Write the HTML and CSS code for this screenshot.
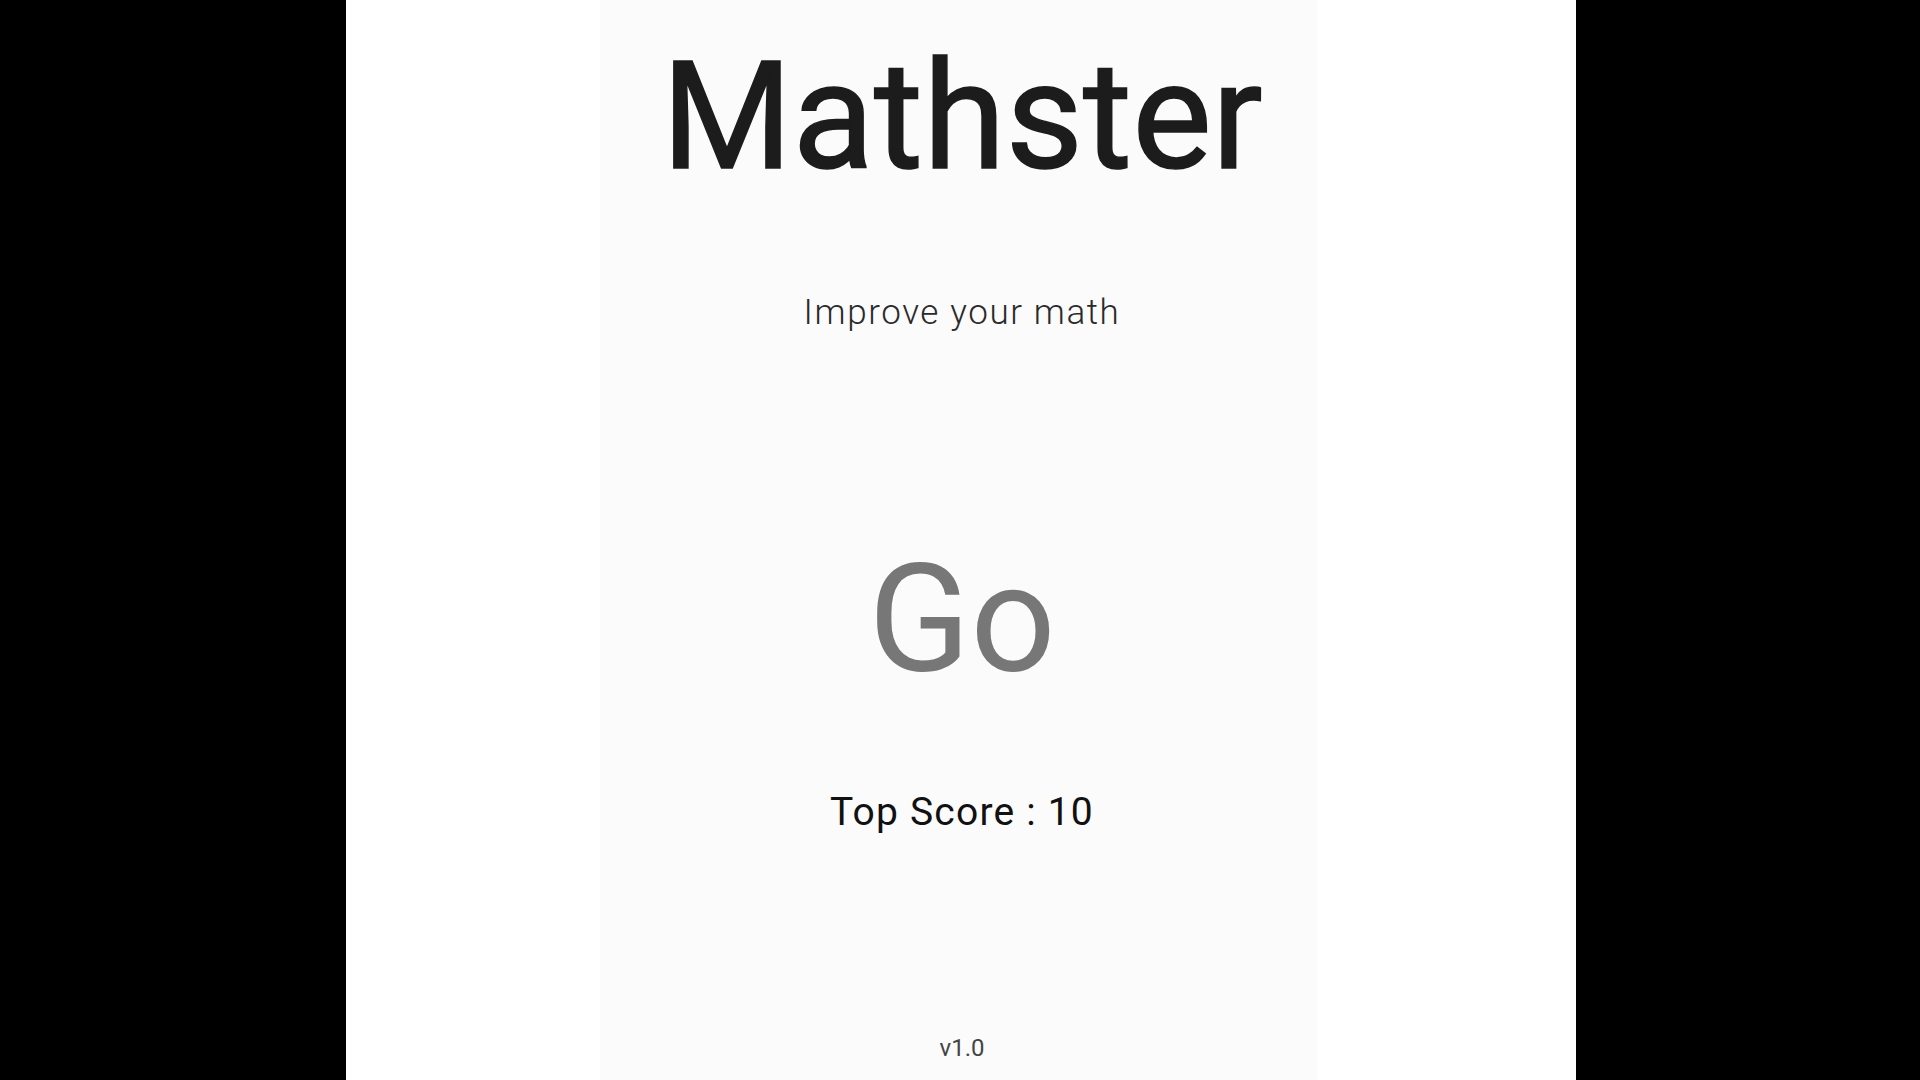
FILE: index.html
```html
<!DOCTYPE html>
<html lang="en">
<head>
<meta charset="utf-8">
<title>Mathster</title>
<link rel="stylesheet" href="styles.css">
</head>
<body>
<div class="frame">
  <main class="screen">
    <h1 class="title">Mathster</h1>
    <p class="tagline">Improve your math</p>
    <button class="go" type="button">Go</button>
    <p class="score">Top Score : 10</p>
    <p class="version">v1.0</p>
  </main>
</div>
</body>
</html>
```

FILE: styles.css
```css
html, body {
  margin: 0;
  padding: 0;
  height: 100%;
}

body {
  background: #000;
  font-family: Roboto, "Noto Sans", "Liberation Sans", sans-serif;
  overflow: hidden;
}

.frame {
  width: 1230px;
  height: 1080px;
  margin: 0 0 0 346px;
  background: #fff;
  display: flex;
  justify-content: center;
}

.screen {
  width: 716px;
  height: 1080px;
  box-sizing: border-box;
  margin-right: 6px;
  padding-top: 42px;
  padding-left: 8px;
  background: #fbfbfb;
  box-shadow: 1px 0 3px rgba(0, 0, 0, 0.025);
  display: flex;
  flex-direction: column;
  align-items: center;
  text-align: center;
}

.title {
  margin: 0;
  font-size: 150px;
  line-height: 1;
  font-weight: 400;
  color: #1c1c1c;
  -webkit-text-stroke: 1.5px #1c1c1c;
}

.tagline {
  margin: 103px 0 0;
  font-size: 35px;
  line-height: 1;
  font-weight: 300;
  letter-spacing: 1.6px;
  color: #2a2a2a;
}

.go {
  margin: 215px 0 0;
  padding: 0;
  border: 0;
  background: none;
  font-family: inherit;
  font-size: 150px;
  line-height: 1;
  font-weight: 400;
  color: #777;
  cursor: pointer;
}

.score {
  margin: 98px 0 0;
  font-size: 39px;
  line-height: 1;
  font-weight: 400;
  letter-spacing: 1.2px;
  color: #111;
}

.version {
  margin: 204px 0 0;
  font-size: 24px;
  line-height: 1;
  font-weight: 400;
  color: #444;
}
```
